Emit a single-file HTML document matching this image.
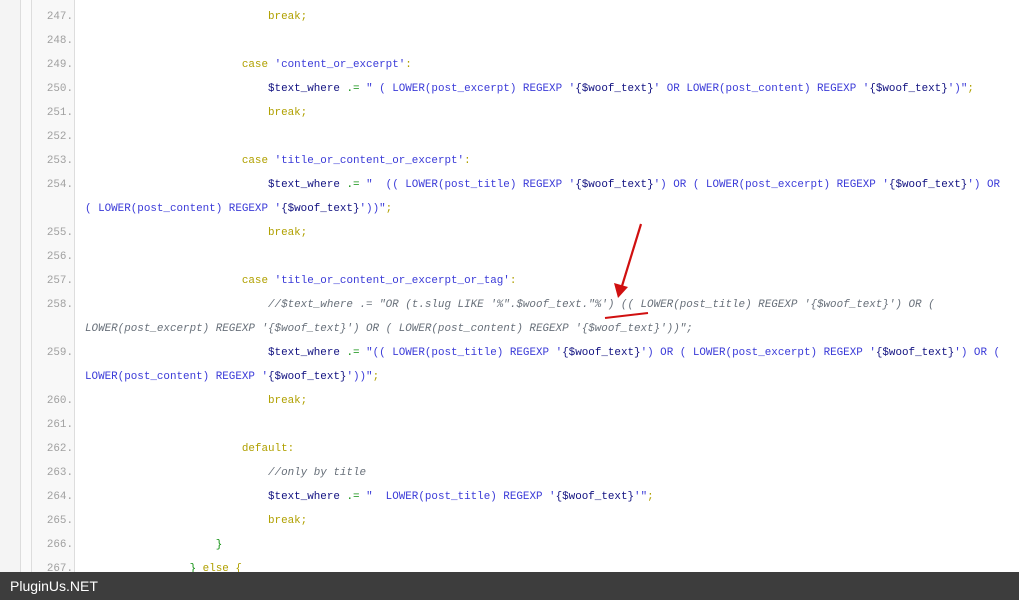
<!DOCTYPE html>
<html><head><meta charset="utf-8"><style>
body{margin:0;width:1019px;height:600px;overflow:hidden;background:#fff;position:relative;font-family:"Liberation Mono",monospace;font-size:10.9px}
.l{position:absolute;top:0;bottom:0}
.r{position:absolute;left:0;height:24px;line-height:24px;width:1019px;white-space:pre;margin-top:1px}
.n{position:absolute;left:32px;width:41px;text-align:right;color:#a0a0a0}
.c{position:absolute;left:85px}
.k{color:#b0a000}.v{color:#101080}.s{color:#3a3ad8}.o{color:#109010}.m{color:#68707a;font-style:italic}.w{color:#101080}
#bar{position:absolute;left:0;top:572px;width:1019px;height:28px;background:#3d3d3d;color:#fff;font-family:"Liberation Sans",sans-serif;font-size:14px;line-height:28px;padding-left:10px;box-sizing:border-box}
</style></head><body>
<div class="l" style="left:0;width:20px;background:#f4f4f4"></div>
<div class="l" style="left:20px;width:1px;background:#ddd"></div>
<div class="l" style="left:21px;width:10px;background:#fafafa"></div>
<div class="l" style="left:31px;width:1px;background:#ddd"></div>
<div class="l" style="left:32px;width:42px;background:#f8f8f8"></div>
<div class="l" style="left:74px;width:1px;background:#ddd"></div>

<div class="r" style="top:4px"><span class="n">247.</span><span class="c">                            <span class="k">break;</span></span></div>
<div class="r" style="top:28px"><span class="n">248.</span></div>
<div class="r" style="top:52px"><span class="n">249.</span><span class="c">                        <span class="k">case</span> <span class="s">'content_or_excerpt'</span><span class="k">:</span></span></div>
<div class="r" style="top:76px"><span class="n">250.</span><span class="c">                            <span class="v">$text_where</span> <span class="o">.=</span> <span class="s">" ( LOWER(post_excerpt) REGEXP '<span class="w">{$woof_text}</span>' OR LOWER(post_content) REGEXP '<span class="w">{$woof_text}</span>')"</span><span class="k">;</span></span></div>
<div class="r" style="top:100px"><span class="n">251.</span><span class="c">                            <span class="k">break;</span></span></div>
<div class="r" style="top:124px"><span class="n">252.</span></div>
<div class="r" style="top:148px"><span class="n">253.</span><span class="c">                        <span class="k">case</span> <span class="s">'title_or_content_or_excerpt'</span><span class="k">:</span></span></div>
<div class="r" style="top:172px"><span class="n">254.</span><span class="c">                            <span class="v">$text_where</span> <span class="o">.=</span> <span class="s">"  (( LOWER(post_title) REGEXP '<span class="w">{$woof_text}</span>') OR ( LOWER(post_excerpt) REGEXP '<span class="w">{$woof_text}</span>') OR</span></span></div>
<div class="r" style="top:196px"><span class="c"><span class="s">( LOWER(post_content) REGEXP '<span class="w">{$woof_text}</span>'))"</span><span class="k">;</span></span></div>
<div class="r" style="top:220px"><span class="n">255.</span><span class="c">                            <span class="k">break;</span></span></div>
<div class="r" style="top:244px"><span class="n">256.</span></div>
<div class="r" style="top:268px"><span class="n">257.</span><span class="c">                        <span class="k">case</span> <span class="s">'title_or_content_or_excerpt_or_tag'</span><span class="k">:</span></span></div>
<div class="r" style="top:292px"><span class="n">258.</span><span class="c">                            <span class="m">//$text_where .= "OR (t.slug LIKE '%".$woof_text."%') (( LOWER(post_title) REGEXP '{$woof_text}') OR (</span></span></div>
<div class="r" style="top:316px"><span class="c"><span class="m">LOWER(post_excerpt) REGEXP '{$woof_text}') OR ( LOWER(post_content) REGEXP '{$woof_text}'))";</span></span></div>
<div class="r" style="top:340px"><span class="n">259.</span><span class="c">                            <span class="v">$text_where</span> <span class="o">.=</span> <span class="s">"(( LOWER(post_title) REGEXP '<span class="w">{$woof_text}</span>') OR ( LOWER(post_excerpt) REGEXP '<span class="w">{$woof_text}</span>') OR (</span></span></div>
<div class="r" style="top:364px"><span class="c"><span class="s">LOWER(post_content) REGEXP '<span class="w">{$woof_text}</span>'))"</span><span class="k">;</span></span></div>
<div class="r" style="top:388px"><span class="n">260.</span><span class="c">                            <span class="k">break;</span></span></div>
<div class="r" style="top:412px"><span class="n">261.</span></div>
<div class="r" style="top:436px"><span class="n">262.</span><span class="c">                        <span class="k">default:</span></span></div>
<div class="r" style="top:460px"><span class="n">263.</span><span class="c">                            <span class="m">//only by title</span></span></div>
<div class="r" style="top:484px"><span class="n">264.</span><span class="c">                            <span class="v">$text_where</span> <span class="o">.=</span> <span class="s">"  LOWER(post_title) REGEXP '<span class="w">{$woof_text}</span>'"</span><span class="k">;</span></span></div>
<div class="r" style="top:508px"><span class="n">265.</span><span class="c">                            <span class="k">break;</span></span></div>
<div class="r" style="top:532px"><span class="n">266.</span><span class="c">                    <span class="o">}</span></span></div>
<div class="r" style="top:556px"><span class="n">267.</span><span class="c">                <span class="o">}</span> <span class="k">else {</span></span></div>

<svg style="position:absolute;left:0;top:0" width="1019" height="600">
<line x1="641" y1="224" x2="622" y2="286" stroke="#d01010" stroke-width="2.2"/>
<polygon points="618,298 614,283 628,287" fill="#d01010"/>
<line x1="605" y1="318" x2="648" y2="313" stroke="#d01010" stroke-width="2"/>
</svg>
<div id="bar">PluginUs.NET</div>
</body></html>
